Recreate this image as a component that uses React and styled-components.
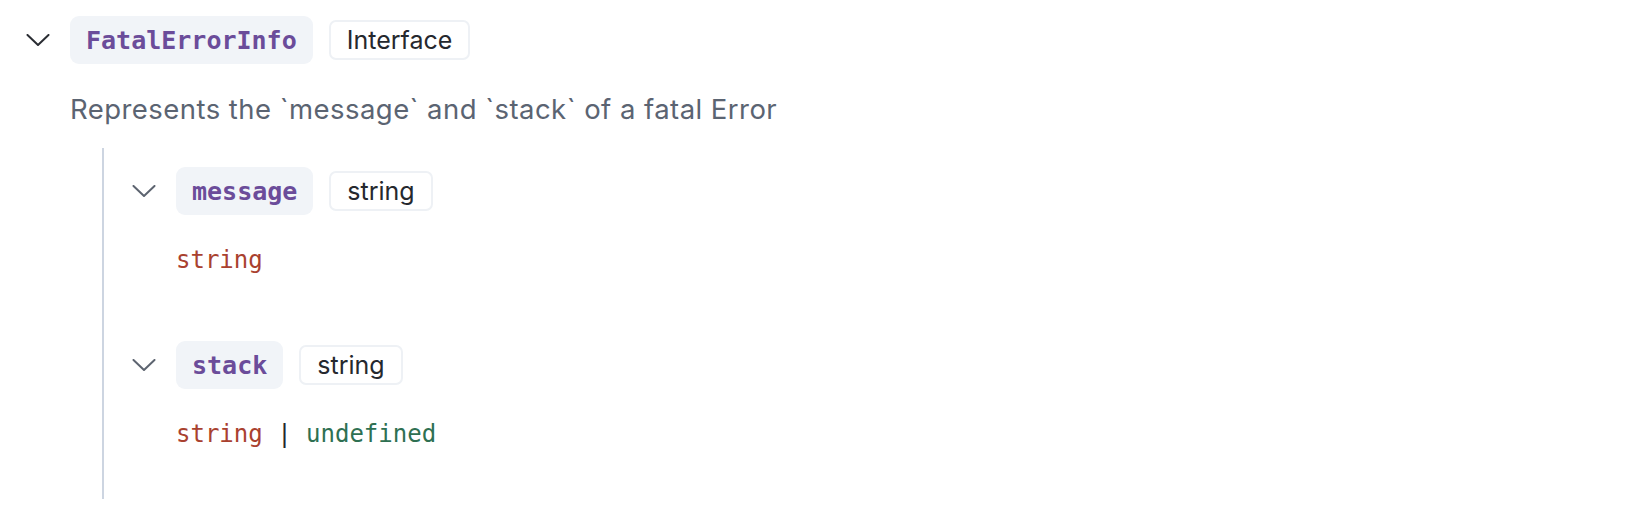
import React from "react";
import styled, { createGlobalStyle } from "styled-components";

const Global = createGlobalStyle`
  html, body { margin: 0; padding: 0; background: #ffffff; }
  body { font-family: Inter, "Noto Sans", sans-serif; }
`;

const Page = styled.div`
  padding: 16px 0 0 26px;
`;

const Header = styled.div`
  display: flex;
  align-items: center;
  height: 48px;
`;

const ChevronBox = styled.span`
  display: inline-flex;
  width: 24px;
  height: 12px;
  margin-right: 20px;
  color: ${(p) => (p.$muted ? "#5d6470" : "#2a2d33")};
`;

const NameBadge = styled.span`
  display: inline-flex;
  align-items: center;
  height: 48px;
  padding: 0 16px;
  box-sizing: border-box;
  background: #f1f4f8;
  border-radius: 9px;
  font-family: "DejaVu Sans Mono", "Liberation Mono", monospace;
  font-weight: 700;
  font-size: 25px;
  color: #6b4c9a;
`;

const KindBadge = styled.span`
  display: inline-flex;
  align-items: center;
  height: 40px;
  margin-left: 16px;
  padding: 0 16px;
  box-sizing: border-box;
  border: 2px solid #eef1f5;
  border-radius: 7px;
  background: #ffffff;
  font-family: Inter, sans-serif;
  font-size: 25px;
  color: #25282e;
`;

const Description = styled.p`
  margin: 27px 0 0 44px;
  font-family: Inter, sans-serif;
  font-size: 27.5px;
  letter-spacing: 0.45px;
  line-height: 36px;
  color: #5b6472;
`;

const Children = styled.div`
  margin: 21px 0 0 76px;
  border-left: 2px solid #cdd5e1;
  padding: 19px 0 47px 28px;
  display: flex;
  flex-direction: column;
  gap: 63px;
`;

const Member = styled.div`
  display: flex;
  flex-direction: column;
`;

const TypeLine = styled.div`
  margin: 27px 0 0 44px;
  font-family: "DejaVu Sans Mono", "Liberation Mono", monospace;
  font-size: 24px;
  line-height: 36px;
  color: #24272e;
  white-space: pre;
`;

const Tok = styled.span`
  color: ${(p) =>
    p.$kind === "keyword" ? "#a9412f" : p.$kind === "literal" ? "#2e7052" : "#24272e"};
`;

function Chevron({ muted }) {
  return (
    <ChevronBox $muted={muted}>
      <svg width="24" height="12" viewBox="0 0 24 12" fill="none">
        <polyline
          points="1.5,1 12,11 22.5,1"
          stroke="currentColor"
          strokeWidth="2"
          strokeLinecap="round"
          strokeLinejoin="round"
        />
      </svg>
    </ChevronBox>
  );
}

const members = [
  { name: "message", kind: "string", type: [{ t: "string", k: "keyword" }] },
  {
    name: "stack",
    kind: "string",
    type: [
      { t: "string", k: "keyword" },
      { t: " | ", k: "op" },
      { t: "undefined", k: "literal" },
    ],
  },
];

export default function App() {
  return (
    <>
      <Global />
      <Page>
        <Header>
          <Chevron />
          <NameBadge>FatalErrorInfo</NameBadge>
          <KindBadge>Interface</KindBadge>
        </Header>
        <Description>Represents the `message` and `stack` of a fatal Error</Description>
        <Children>
          {members.map((m) => (
            <Member key={m.name}>
              <Header>
                <Chevron muted />
                <NameBadge>{m.name}</NameBadge>
                <KindBadge>{m.kind}</KindBadge>
              </Header>
              <TypeLine>
                {m.type.map((tok, i) => (
                  <Tok key={i} $kind={tok.k}>
                    {tok.t}
                  </Tok>
                ))}
              </TypeLine>
            </Member>
          ))}
        </Children>
      </Page>
    </>
  );
}
